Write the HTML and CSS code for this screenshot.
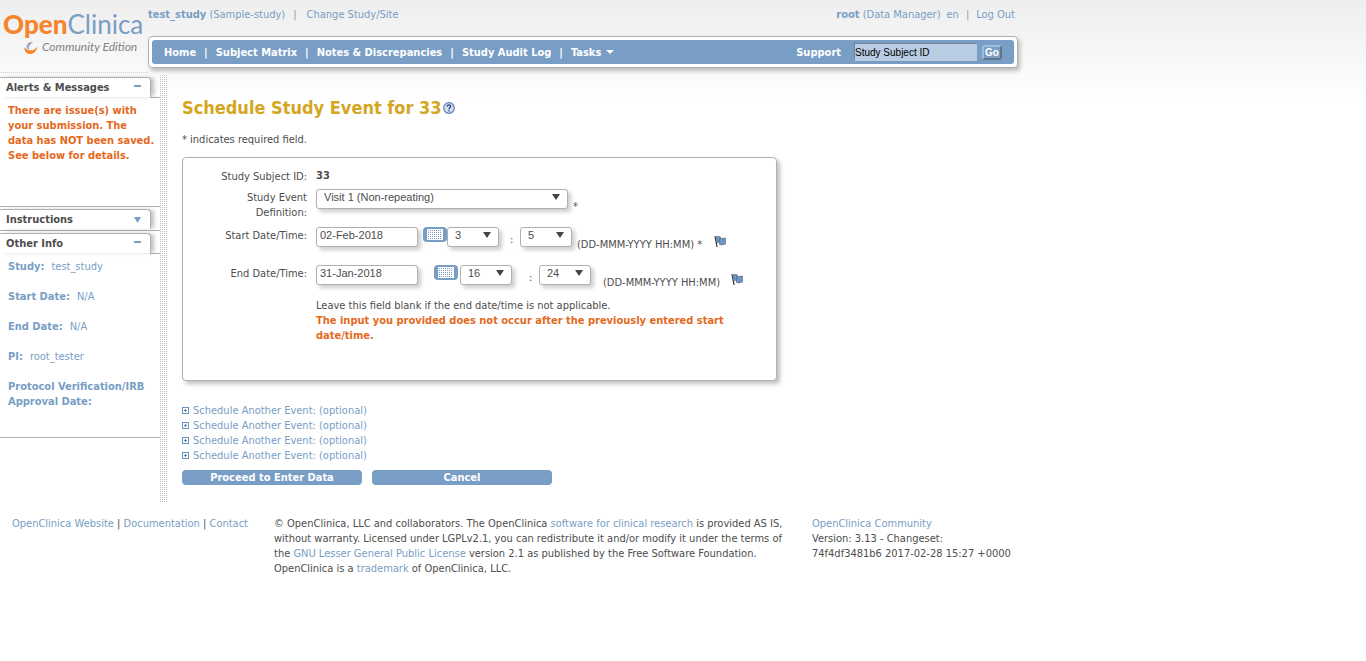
FILE: index.html
```html
<!DOCTYPE html>
<html lang="en">
<head>
<meta charset="utf-8">
<title>OpenClinica - Schedule Study Event</title>
<link rel="stylesheet" href="styles.css">
</head>
<body>
<svg width="0" height="0" class="defs" aria-hidden="true">
  <symbol id="calendar" viewBox="0 0 24 15">
    <rect width="24" height="15" rx="4" fill="#789ec5"/>
    <rect x="4" y="2" width="16" height="11" fill="#fff"/>
    <path d="M5 3.500H19M5 5.500H19M5 7.500H19M5 9.500H19M5 11.500H19" stroke="#789ec5" stroke-dasharray="1 1"/>
  </symbol>
  <symbol id="flag" viewBox="0 0 13 13">
    <path d="M1 1l2 11" stroke="#333" stroke-width="1.2" fill="none"/>
    <path d="M2 2c1.500-1 3-1 4.500 0v6C5 7 4 7 3 8z" fill="#6d95c0" stroke="#4a6788" stroke-width=".6"/>
    <path d="M5.500 3.500c2 .8 3.500-.8 6-.3v6c-2-.4-3 1.500-6 .3z" fill="#6d95c0" stroke="#4a6788" stroke-width=".6"/>
  </symbol>
  <symbol id="plus" viewBox="0 0 7 7">
    <rect x=".5" y=".5" width="6" height="6" fill="#fff" stroke="#6b94c0"/>
    <path d="M2 3.500h3M3.500 2v3" stroke="#5b87b8"/>
  </symbol>
</svg>

<header class="header">
  <div class="brand">
    <div class="logo"><b>Open</b>Clinica</div>
    <div class="edition">
      <svg width="14" height="13" viewBox="0 0 14 13" aria-hidden="true">
        <path d="M.5 6.500C0 10 2.500 13 6 13s6.500-2.500 7.500-7.500C11.500 8.500 9.500 9.300 7 9.300c-2.500 0-4.500-.6-6.500-2.800z" fill="#f5842a"/>
        <path d="M2.500 5.500C3 2.500 6 .5 9 1 7 1.800 7.500 3 6 4.200S4.500 7 5.500 8.800C3.500 8.500 2.300 7 2.500 5.500z" fill="#8fabd0"/>
        <path d="M3.500 2.500l2-1 .5 1.500z" fill="#f5842a"/>
      </svg>
      <span>Community Edition</span>
    </div>
  </div>
  <div class="head-main">
    <div class="account">
      <div><b><a href="#">test_study</a></b> (Sample-study)<span class="bar">|</span><a href="#">Change Study/Site</a></div>
      <div><b>root</b> (Data Manager)<span class="lang">en</span><span class="pipe">|</span><a href="#">Log Out</a></div>
    </div>
    <div class="navbox">
      <nav class="nav">
        <div class="links">
          <a href="#">Home</a><span>|</span><a href="#">Subject Matrix</a><span>|</span><a href="#">Notes &amp; Discrepancies</a><span>|</span><a href="#">Study Audit Log</a><span>|</span><a href="#">Tasks<svg width="8" height="4" viewBox="0 0 8 4" aria-hidden="true"><path d="M0 0h8L4 4z" fill="#fff"/></svg></a>
        </div>
        <a class="support" href="#">Support</a>
        <input class="search" type="text" value="Study Subject ID" aria-label="Study Subject ID">
        <button class="go" type="button">Go</button>
      </nav>
    </div>
  </div>
</header>

<div class="body">
  <aside class="side">
    <section class="panel alerts">
      <h2 class="tab"><span>Alerts &amp; Messages</span><i class="minus"></i></h2>
      <p class="alert">There are issue(s) with<br>your submission. The<br>data has NOT been saved.<br>See below for details.</p>
    </section>
    <section class="panel instructions">
      <h2 class="tab"><span>Instructions</span><svg width="7" height="6" viewBox="0 0 7 6" aria-hidden="true"><path d="M0 0h7L3.500 6z" fill="#789ec5"/></svg></h2>
    </section>
    <section class="panel info">
      <h2 class="tab"><span>Other Info</span><i class="minus"></i></h2>
      <dl>
        <div><dt>Study:</dt><dd>test_study</dd></div>
        <div><dt>Start Date:</dt><dd>N/A</dd></div>
        <div><dt>End Date:</dt><dd>N/A</dd></div>
        <div><dt>PI:</dt><dd>root_tester</dd></div>
        <div><dt>Protocol Verification/IRB Approval Date:</dt></div>
      </dl>
    </section>
  </aside>
  <div class="dots"></div>
  <main class="main">
    <h1>Schedule Study Event for 33
      <svg width="12" height="12" viewBox="0 0 12 12" role="img" aria-label="Help"><circle cx="6" cy="6" r="5.300" fill="#d5e0ef" stroke="#5f7dae" stroke-width="1.200"/><path d="M4.200 4.600C4.300 2.500 7.900 2.600 7.700 4.600 7.500 5.800 6 5.700 6 7.200M6 8.200v1.300" fill="none" stroke="#2f5090" stroke-width="1.400"/></svg>
    </h1>
    <p class="required">* indicates required field.</p>
    <form>
      <div class="card">
        <div class="label">Study Subject ID:</div>
        <div class="subject">33</div>

        <label class="label" for="def">Study Event<br>Definition:</label>
        <div class="row">
          <span class="select wide"><select id="def"><option>Visit 1 (Non-repeating)</option></select></span>
          <span class="low star">*</span>
        </div>

        <label class="label" for="start">Start Date/Time:</label>
        <div class="row">
          <input class="date" id="start" type="text" value="02-Feb-2018">
          <button class="cal" type="button" aria-label="Pick start date"><svg width="24" height="15"><use href="#calendar"/></svg></button>
          <span class="select"><select aria-label="Start hour"><option>3</option></select></span>
          <span class="colon">:</span>
          <span class="select"><select aria-label="Start minute"><option>5</option></select></span>
          <span class="low hint">(DD-MMM-YYYY HH:MM) *</span>
          <button class="flag" type="button" aria-label="Start discrepancy note"><svg width="13" height="13"><use href="#flag"/></svg></button>
        </div>

        <label class="label" for="end">End Date/Time:</label>
        <div class="row end">
          <input class="date" id="end" type="text" value="31-Jan-2018">
          <button class="cal" type="button" aria-label="Pick end date"><svg width="24" height="15"><use href="#calendar"/></svg></button>
          <span class="select"><select aria-label="End hour"><option>16</option></select></span>
          <span class="colon">:</span>
          <span class="select"><select aria-label="End minute"><option>24</option></select></span>
          <span class="low hint">(DD-MMM-YYYY HH:MM)</span>
          <button class="flag" type="button" aria-label="End discrepancy note"><svg width="13" height="13"><use href="#flag"/></svg></button>
        </div>

        <div class="notes">
          Leave this field blank if the end date/time is not applicable.
          <strong>The input you provided does not occur after the previously entered start date/time.</strong>
        </div>
      </div>
      <ul class="more">
        <li><a href="#"><svg width="7" height="7"><use href="#plus"/></svg>Schedule Another Event: (optional)</a></li>
        <li><a href="#"><svg width="7" height="7"><use href="#plus"/></svg>Schedule Another Event: (optional)</a></li>
        <li><a href="#"><svg width="7" height="7"><use href="#plus"/></svg>Schedule Another Event: (optional)</a></li>
        <li><a href="#"><svg width="7" height="7"><use href="#plus"/></svg>Schedule Another Event: (optional)</a></li>
      </ul>
      <div class="actions">
        <button type="submit">Proceed to Enter Data</button>
        <button type="button">Cancel</button>
      </div>
    </form>
  </main>
</div>

<footer class="footer">
  <div><a href="#">OpenClinica Website</a> | <a href="#">Documentation</a> | <a href="#">Contact</a></div>
  <div>© OpenClinica, LLC and collaborators. The OpenClinica <a href="#">software for clinical research</a> is provided AS IS,<br>without warranty. Licensed under LGPLv2.1, you can redistribute it and/or modify it under the terms of<br>the <a href="#">GNU Lesser General Public License</a> version 2.1 as published by the Free Software Foundation.<br>OpenClinica is a <a href="#">trademark</a> of OpenClinica, LLC.</div>
  <div><a href="#">OpenClinica Community</a><br>Version: 3.13 - Changeset:<br>74f4df3481b6 2017-02-28 15:27 +0000</div>
</footer>
</body>
</html>
```
FILE: styles.css
```css
* { box-sizing: border-box; }

body {
  margin: 0;
  background: #fff linear-gradient(#eee, #fff) 0 0 / 100% 104px no-repeat;
  color: #4d4d4d;
  font: 11px/15px Tahoma, "DejaVu Sans Condensed", sans-serif;
}

a { color: #789ec5; text-decoration: none; }
p, h1, h2, ul, dl, dd { margin: 0; padding: 0; }
svg { display: block; }
.defs { position: absolute; }

.header { display: flex; max-width: 1018px; height: 74px; }
.brand {
  flex: 0 0 148px;
  height: 73px;
  padding: 8px 0 0 3px;
  background: linear-gradient(90deg, #ccc 50%, transparent 50%) 13px 100% / 2px 1px repeat-x;
}
.logo { color: #789ec5; font: 400 26px/32px Lato, sans-serif; white-space: nowrap; }
.logo b { color: #f5842a; font-weight: 900; }
.edition { display: flex; align-items: center; gap: 4px; padding-left: 21px; color: #808285; font: italic 12px/14px Lato, sans-serif; white-space: nowrap; }

.head-main { flex: 1; }
.account { display: flex; justify-content: space-between; height: 36px; padding: 7px 3px 0 0; color: #789ec5; }
.bar { margin: 0 10px 0 8px; }
.lang { margin-left: 6px; }
.pipe { margin: 0 7px; }

.navbox {
  padding: 3px;
  border: 1px solid #b0b0b0;
  border-radius: 4px;
  background: #fff;
  box-shadow: 2px 3px 4px rgba(0, 0, 0, .25);
}
.nav { display: flex; align-items: center; height: 24px; padding: 0 12px; border-radius: 3px; background: #789ec5; color: #fff; font-weight: bold; }
.nav a { color: #fff; }
.links { display: flex; flex: 1; gap: 8px; }
.links a { display: flex; align-items: center; gap: 5px; }
.search { width: 123px; height: 18px; margin: 0 5px 0 13px; padding: 0; border: 1px solid #b9cde2; border-color: #6f8299 #b9cde2 #b9cde2 #6f8299; background: #b9cde2; color: #000; font: 10px "Liberation Sans", sans-serif; }
.go { width: 20px; height: 15px; padding: 0; border: 2px outset #9fbddb; border-radius: 3px; background: #789ec5; color: #fff; font: bold 10px/11px "Liberation Sans", sans-serif; }

.body { display: flex; }
.side { flex: 0 0 160px; padding-top: 3px; }
.panel { border-bottom: 1px solid #b0b0b0; }
.tab {
  display: flex;
  align-items: center;
  justify-content: space-between;
  width: 151px;
  height: 20px;
  padding: 0 9px 0 6px;
  border: solid #b0b0b0;
  border-width: 1px 1px 0 0;
  border-radius: 0 4px 0 0;
  background: #fff;
  box-shadow: 4px 0 4px -1px rgba(0, 0, 0, .25);
  font-size: 11px;
  line-height: 15px;
}
.alerts, .info { background: linear-gradient(#b0b0b0, #b0b0b0) 150px 20px / 10px 1px no-repeat; }
.minus { width: 7px; height: 2px; margin-bottom: 3px; background: #789ec5; }
.alerts { min-height: 130px; margin-bottom: 2px; }
.alert { padding: 6px 0 0 8px; color: #e4691c; font-weight: bold; white-space: nowrap; }
.instructions { padding-bottom: 1px; margin-bottom: 2px; }
.info { height: 205px; }
dl { padding: 6px 8px 0; color: #789ec5; }
dl div { margin-bottom: 15px; }
dt { display: inline; font-weight: bold; }
dd { display: inline; margin-left: 7px; }
.dots {
  flex: 0 0 7px;
  background:
    repeating-linear-gradient(#fff 0 1px, transparent 1px 2px),
    repeating-linear-gradient(90deg, #bbb 0 1px, #fff 1px 2px);
}

.main { flex: 1; max-width: 610px; padding: 21px 0 18px 15px; }
h1 { display: flex; align-items: center; gap: 1px; color: #d4a61e; font-size: 18px; line-height: 26px; }
.required { margin: 11px 0 10px; }
.card {
  display: grid;
  grid-template-columns: 124px 1fr;
  grid-template-rows: 21px 38px 38px 33px;
  column-gap: 9px;
  align-content: start;
  min-height: 224px;
  padding: 10px 40px 0 0;
  border: 1px solid #b0b0b0;
  border-radius: 4px;
  background: #fff;
  box-shadow: 3px 3px 4px rgba(0, 0, 0, .25);
}
.label { padding-top: 1px; text-align: right; }
.subject { font-weight: bold; }
.row { display: flex; align-items: flex-start; white-space: nowrap; }
.date, select {
  height: 20px;
  border: 1px solid #b0b0b0;
  border-radius: 3px;
  background: #fff;
  color: #4d4d4d;
  box-shadow: 3px 3px 4px rgba(0, 0, 0, .2);
  font: 11px "Liberation Sans", sans-serif;
}
.date { width: 102px; padding: 0 3px 5px; }
.select { position: relative; width: 52px; height: 20px; }
.wide { width: 252px; }
select { display: block; width: 100%; appearance: none; padding: 0 7px 5px; }
.select::after {
  content: "";
  position: absolute;
  top: 5px;
  right: 8px;
  border: solid transparent;
  border-width: 6px 4px 0;
  border-top-color: #444;
  pointer-events: none;
}
.low { padding-top: 10px; }
.star { margin-left: 5px; }
button { cursor: pointer; }
.cal, .flag { padding: 0; border: 0; background: none; }
.cal { margin-left: 5px; }
.colon { width: 21px; padding: 5px 0 0 11px; }
.hint { width: 142px; padding-left: 5px; }
.flag { margin-top: 8px; }
.end .cal { margin: 0 0 0 16px; }
.end .select { margin-left: 2px; }
.end .colon { width: 25px; padding-left: 17px; }
.end .hint { width: 140px; padding-left: 12px; }
.notes { grid-column: 2; }
.notes strong { display: block; color: #e4691c; }

.more { margin-top: 22px; list-style: none; }
.more a { display: inline-flex; align-items: center; gap: 4px; }
.actions { display: flex; gap: 10px; margin-top: 7px; }
.actions button { width: 180px; height: 15px; padding: 0; border: 0; border-radius: 4px; background: #789ec5; color: #fff; font: bold 11px/15px Tahoma, "DejaVu Sans Condensed", sans-serif; }

.footer { display: grid; grid-template-columns: 262px 538px auto; justify-content: start; padding: 13px 12px 0; white-space: nowrap; }
```
